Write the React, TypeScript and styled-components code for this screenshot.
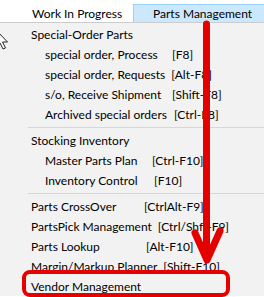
import styled, { createGlobalStyle } from 'styled-components'

// ── Global ────────────────────────────────────────────────
const Global = createGlobalStyle`
  html, body { margin: 0; padding: 0; background: #fff; }
  body { font-family: "Segoe UI", Lato, "Noto Sans", sans-serif; }
`

// ── Styled ────────────────────────────────────────────────
const Screen = styled.div`
  position: relative;
  width: 264px;
  height: 297px;
  overflow: hidden;
  background: #fff;
  font-size: 12px;
  color: #000;
`

const MenuBar = styled.div`
  height: 22px;
  display: flex;
  align-items: flex-end;
  background: #fff;
`

const BarItem = styled.div<{ $open?: boolean; $width: number }>`
  box-sizing: border-box;
  width: ${(p) => p.$width}px;
  height: 18px;
  display: flex;
  align-items: center;
  padding-left: ${(p) => (p.$open ? 19 : 31)}px;
  background: ${(p) => (p.$open ? '#cce8ff' : 'transparent')};
  border: 1px solid ${(p) => (p.$open ? '#99d1ff' : 'transparent')};
  border-bottom: none;
  white-space: nowrap;
  flex-shrink: 0;
`

const Dropdown = styled.div`
  background: #f2f2f2;
  border-top: 1px solid #cccccc;
  padding-top: 1px;
  display: flex;
  flex-direction: column;
`

const Row = styled.div<{ $indent: number }>`
  height: 20px;
  display: flex;
  align-items: center;
  gap: 6px;
  padding-left: ${(p) => p.$indent}px;
  white-space: nowrap;
`

const Label = styled.span<{ $width?: number }>`
  display: inline-block;
  min-width: ${(p) => (p.$width ? `${p.$width}px` : '0')};
`

const Shortcut = styled.span``

const Separator = styled.div`
  height: 6px;
  display: flex;
  align-items: center;
  padding-left: 28px;
  &::after {
    content: '';
    flex: 1;
    height: 1px;
    background: #d7d7d7;
  }
`

const Overlay = styled.svg`
  position: absolute;
  left: 0;
  top: 0;
  pointer-events: none;
`

// ── Data ──────────────────────────────────────────────────
type Item =
  | { kind: 'sep' }
  | { kind: 'item'; label: string; sub?: boolean; key?: string; keyAt?: number }

const items: Item[] = [
  { kind: 'item', label: 'Special-Order Parts' },
  { kind: 'item', label: 'special order, Process', sub: true, key: '[F8]', keyAt: 172 },
  { kind: 'item', label: 'special order, Requests', sub: true, key: '[Alt-F8]', keyAt: 169 },
  { kind: 'item', label: 's/o, Receive Shipment', sub: true, key: '[Shift-F8]', keyAt: 172 },
  { kind: 'item', label: 'Archived special orders', sub: true, key: '[Ctrl-F8]', keyAt: 174 },
  { kind: 'sep' },
  { kind: 'item', label: 'Stocking Inventory' },
  { kind: 'item', label: 'Master Parts Plan', sub: true, key: '[Ctrl-F10]', keyAt: 152 },
  { kind: 'item', label: 'Inventory Control', sub: true, key: '[F10]', keyAt: 154 },
  { kind: 'sep' },
  { kind: 'item', label: 'Parts CrossOver', key: '[CtrlAlt-F9]', keyAt: 144 },
  { kind: 'item', label: 'PartsPick Management', key: '[Ctrl/Shft-F9]', keyAt: 153 },
  { kind: 'item', label: 'Parts Lookup', key: '[Alt-F10]', keyAt: 146 },
  { kind: 'item', label: 'Margin/Markup Planner', key: '[Shift-F10]', keyAt: 154 },
  { kind: 'item', label: 'Vendor Management' },
]

// ── Component ─────────────────────────────────────────────
export default function App() {
  return (
    <Screen>
      <Global />
      <MenuBar>
        <BarItem $width={133}>Work In Progress</BarItem>
        <BarItem $open $width={140}>Parts Management</BarItem>
      </MenuBar>

      <Dropdown>
        {items.map((it, i) => {
          if (it.kind === 'sep') return <Separator key={i} />
          const indent = it.sub ? 45 : 31
          return (
            <Row key={i} $indent={indent}>
              <Label $width={it.keyAt ? it.keyAt - indent - 6 : undefined}>{it.label}</Label>
              {it.key && <Shortcut>{it.key}</Shortcut>}
            </Row>
          )
        })}
      </Dropdown>

      {/* mouse cursor + red annotations drawn over the menu */}
      <Overlay width={264} height={297} viewBox="0 0 264 297">
        <polygon
          points="-4,30 -4,47 0,43 3,49 5.5,48 2.5,42 7.5,42"
          fill="#fff"
          stroke="#222"
          strokeWidth={1}
          strokeLinejoin="round"
        />
        <g stroke="#e50000" strokeLinecap="round" strokeLinejoin="round" fill="none">
          <line x1={206.5} y1={24} x2={206.5} y2={256} strokeWidth={7} />
          <polyline points="195,233 207,260 220,231" strokeWidth={7} />
          <rect x={24} y={272} width={204} height={23} rx={6} strokeWidth={4} />
        </g>
      </Overlay>
    </Screen>
  )
}
